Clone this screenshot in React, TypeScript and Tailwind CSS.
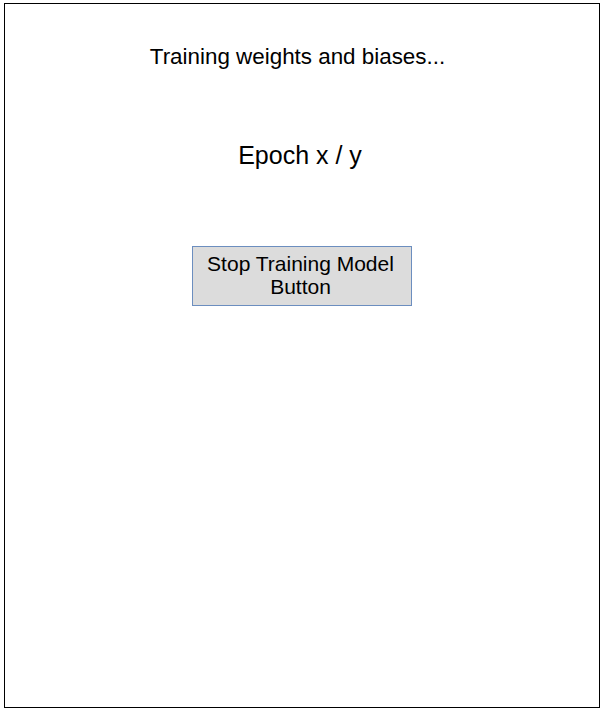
export default function App() {
    return (
        <div className="w-[604px] h-[711px] bg-white pt-[3px] pl-[4px]" style={{ fontFamily: '"Liberation Sans", Arial, sans-serif' }}>
            {/* Frame */}
            <div className="w-[596px] h-[705px] border border-black flex flex-col items-center">
                {/* Status */}
                <p className="mt-[40px] text-[22.4px] leading-[25px] text-black -ml-[9px]">
                    Training weights and biases...
                </p>

                {/* Epoch counter */}
                <p className="mt-[72px] text-[25px] leading-[29px] text-black -ml-[4px]">Epoch x / y</p>

                {/* Stop button */}
                <button className="mt-[76px] w-[220px] h-[60px] border border-[#6c8ebf] bg-[#dcdcdc] pb-[2px] pr-[3px] text-[21px] leading-[23px] text-black">
                    Stop Training Model
                    <br />
                    Button
                </button>
            </div>
        </div>
    );
}
